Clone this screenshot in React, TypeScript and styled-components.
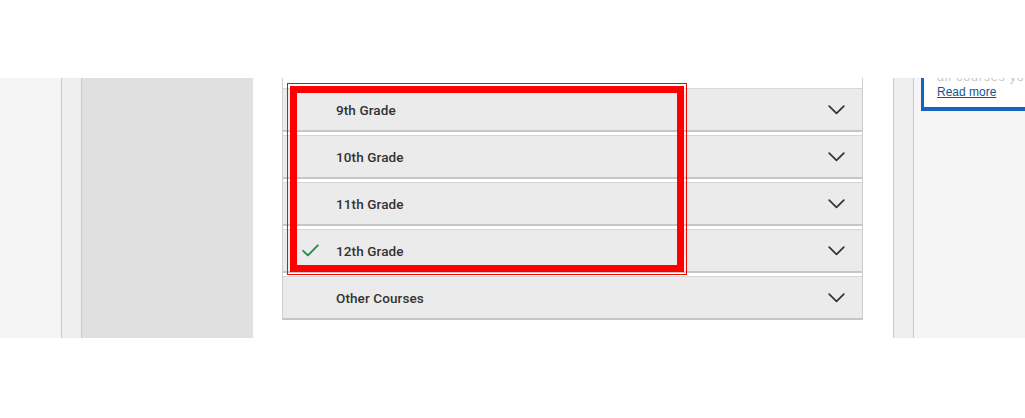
import React from "react";
import styled, { createGlobalStyle } from "styled-components";

const Global = createGlobalStyle`
  html, body { margin: 0; padding: 0; background: #ffffff; }
  body { font-family: Roboto, "Open Sans", "Liberation Sans", sans-serif; }
`;

const Page = styled.div`
  width: 1025px;
  height: 418px;
  background: #ffffff;
  padding-top: 78px;
  box-sizing: border-box;
`;

const Band = styled.div`
  display: flex;
  height: 260px;
  align-items: stretch;
`;

const Panel = styled.div<{ $w: number; $bg: string; $right?: boolean; $left?: boolean }>`
  width: ${(p) => p.$w}px;
  flex: none;
  background: ${(p) => p.$bg};
  border-right: ${(p) => (p.$right ? "1px solid #c9c9c9" : "none")};
  border-left: ${(p) => (p.$left ? "1px solid #c9c9c9" : "none")};
`;

const Spacer = styled.div<{ $w: number }>`
  width: ${(p) => p.$w}px;
  flex: none;
`;

const Accordion = styled.div`
  position: relative;
  width: 579px;
  flex: none;
  align-self: flex-start;
  border-left: 1px solid #cfcfcf;
  border-right: 1px solid #cfcfcf;
  padding-top: 10px;
  display: flex;
  flex-direction: column;
  gap: 3px;
  background: #ffffff;
`;

const Row = styled.div`
  height: 41px;
  display: flex;
  align-items: center;
  background: #ebebeb;
  border-top: 1px solid #d7d7d7;
  border-bottom: 2px solid #c6c6c6;
`;

const CheckSlot = styled.div`
  width: 53px;
  flex: none;
  display: flex;
  align-items: center;
  padding-left: 19px;
  box-sizing: border-box;
`;

const Label = styled.span`
  flex: 1;
  font-family: Roboto, "Open Sans", sans-serif;
  font-size: 13.5px;
  font-weight: 500;
  color: #333333;
  letter-spacing: 0.1px;
`;

const ChevronSlot = styled.div`
  width: 17px;
  margin-right: 17px;
  display: flex;
  align-items: center;
  justify-content: center;
`;

const Highlight = styled.div`
  position: absolute;
  left: 4px;
  top: 5px;
  width: 400px;
  height: 192px;
  box-sizing: border-box;
  border: 1px solid #ff0000;
  padding: 2px;
  pointer-events: none;
`;

const HighlightInner = styled.div`
  width: 100%;
  height: 100%;
  box-sizing: border-box;
  border: 7px solid #ff0000;
`;

const RightPanel = styled.div`
  flex: 1;
  background: #f5f5f5;
  overflow: hidden;
  padding-left: 7px;
`;

const Card = styled.div`
  margin-top: -9px;
  width: 200px;
  background: #ffffff;
  border-left: 3px solid #1565c0;
  border-bottom: 4px solid #1565c0;
  padding: 0 0 8px 13px;
  box-sizing: border-box;
`;

const Faded = styled.div`
  font-family: "Liberation Sans", Arial, sans-serif;
  font-size: 12.5px;
  line-height: 16px;
  color: #c8c8c8;
  white-space: nowrap;
  letter-spacing: 0.8px;
`;

const ReadMore = styled.a`
  display: block;
  font-family: "Liberation Sans", Arial, sans-serif;
  font-size: 12px;
  line-height: 14px;
  color: #15558f;
  text-decoration: underline;
`;

const Chevron = () => (
  <svg width="17" height="10" viewBox="0 0 17 10" fill="none">
    <path d="M1.2 1.2 L8.5 8.3 L15.8 1.2" stroke="#333" strokeWidth="1.7" strokeLinecap="round" strokeLinejoin="round" />
  </svg>
);

const Check = () => (
  <svg width="17" height="13" viewBox="0 0 17 13" fill="none">
    <path d="M1.2 6.8 L5.9 11.4 L15.8 1.4" stroke="#1e8c45" strokeWidth="1.8" strokeLinecap="round" strokeLinejoin="round" />
  </svg>
);

const items = [
  { label: "9th Grade", done: false },
  { label: "10th Grade", done: false },
  { label: "11th Grade", done: false },
  { label: "12th Grade", done: true },
  { label: "Other Courses", done: false },
];

export default function App() {
  return (
    <Page>
      <Global />
      <Band>
        <Panel $w={61} $bg="#f5f5f5" $right />
        <Panel $w={19} $bg="#efefef" $right />
        <Panel $w={171} $bg="#e0e0e0" />
        <Spacer $w={29} />
        <Accordion>
          {items.map((it) => (
            <Row key={it.label}>
              <CheckSlot>{it.done && <Check />}</CheckSlot>
              <Label>{it.label}</Label>
              <ChevronSlot>
                <Chevron />
              </ChevronSlot>
            </Row>
          ))}
          <Highlight>
            <HighlightInner />
          </Highlight>
        </Accordion>
        <Spacer $w={30} />
        <Panel $w={19} $bg="#efefef" $left $right />
        <RightPanel>
          <Card>
            <Faded>all courses you</Faded>
            <ReadMore href="#">Read more</ReadMore>
          </Card>
        </RightPanel>
      </Band>
    </Page>
  );
}
